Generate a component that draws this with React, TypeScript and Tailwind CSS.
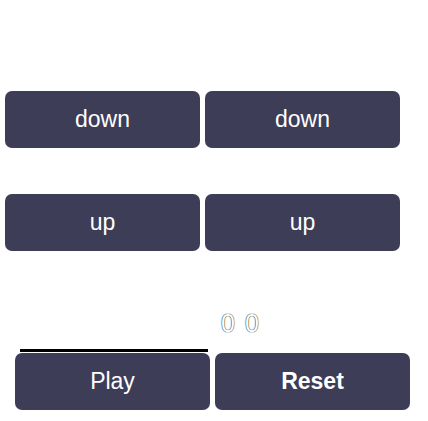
import React from "react";

const btn =
  "block w-[195px] h-[57px] rounded-[7px] bg-[#3d3d58] text-white text-[23px] leading-[57px] text-center p-0";

export default function App() {
  return (
    <div className="w-[428px] h-[421px] bg-white font-['Liberation_Sans',Arial,sans-serif] text-white overflow-hidden">
      <div className="h-[36px] flex items-center justify-center text-[13px]">
        Pomodoro Clock
      </div>
      <div className="h-[55px] flex items-center pl-[8px] text-[17px] gap-[16px]">
        <span>Break Length: 5</span>
        <span>Session Length: 25 min 0</span>
      </div>
      <div className="flex gap-[5px] pl-[5px]">
        <button className={btn}>down</button>
        <button className={btn}>down</button>
      </div>
      <div className="h-[46px] flex items-center justify-center text-[13px]">
        break session
      </div>
      <div className="flex gap-[5px] pl-[5px]">
        <button className={btn}>up</button>
        <button className={btn}>up</button>
      </div>
      <div className="h-[44px] flex items-center justify-center text-[15px]">
        Session
      </div>
      <div className="h-[58px] flex items-center justify-center pl-[52px] gap-[10px] text-[25px] [text-shadow:0_0_1px_#1a2a30,0_0_1px_#1a2a30]">
        <span>0</span>
        <span>0</span>
      </div>
      <div className="relative flex gap-[5px] pl-[15px]">
        <div className="absolute left-[20px] top-[-4px] w-[188px] h-[3px] bg-black" />
        <button className={btn}>Play</button>
        <button className={`${btn} font-semibold`}>Reset</button>
      </div>
    </div>
  );
}
